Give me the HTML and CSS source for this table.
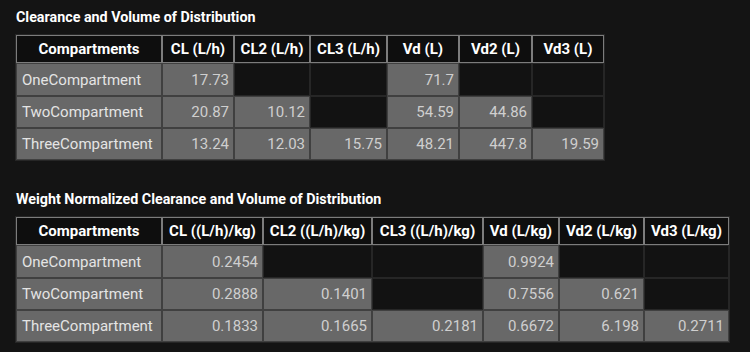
FILE: index.html
```html
<!DOCTYPE html>
<html>
<head>
<meta charset="utf-8">
<link rel="stylesheet" href="styles.css">
</head>
<body>
<section class="block">
  <h2 class="title">Clearance and Volume of Distribution</h2>
  <table class="grid t1">
    <colgroup><col class="c0"><col class="c1"><col class="c2"><col class="c3"><col class="c4"><col class="c5"><col class="c6"></colgroup>
    <thead><tr><th>Compartments</th><th>CL (L/h)</th><th>CL2 (L/h)</th><th>CL3 (L/h)</th><th>Vd (L)</th><th>Vd2 (L)</th><th>Vd3 (L)</th></tr></thead>
    <tbody>
      <tr class="r1"><td class="name">OneCompartment</td><td>17.73</td><td class="empty"></td><td class="empty"></td><td>71.7</td><td class="empty"></td><td class="empty"></td></tr>
      <tr class="r2"><td class="name">TwoCompartment</td><td>20.87</td><td>10.12</td><td class="empty"></td><td>54.59</td><td>44.86</td><td class="empty"></td></tr>
      <tr class="r3"><td class="name">ThreeCompartment</td><td>13.24</td><td>12.03</td><td>15.75</td><td>48.21</td><td>447.8</td><td>19.59</td></tr>
    </tbody>
  </table>
</section>
<section class="block second">
  <h2 class="title">Weight Normalized Clearance and Volume of Distribution</h2>
  <table class="grid t2">
    <colgroup><col class="c0"><col class="c1"><col class="c2"><col class="c3"><col class="c4"><col class="c5"><col class="c6"></colgroup>
    <thead><tr><th>Compartments</th><th>CL ((L/h)/kg)</th><th>CL2 ((L/h)/kg)</th><th>CL3 ((L/h)/kg)</th><th>Vd (L/kg)</th><th>Vd2 (L/kg)</th><th>Vd3 (L/kg)</th></tr></thead>
    <tbody>
      <tr class="r1"><td class="name">OneCompartment</td><td>0.2454</td><td class="empty"></td><td class="empty"></td><td>0.9924</td><td class="empty"></td><td class="empty"></td></tr>
      <tr class="r2"><td class="name">TwoCompartment</td><td>0.2888</td><td>0.1401</td><td class="empty"></td><td>0.7556</td><td>0.621</td><td class="empty"></td></tr>
      <tr class="r3"><td class="name">ThreeCompartment</td><td>0.1833</td><td>0.1665</td><td>0.2181</td><td>0.6672</td><td>6.198</td><td>0.2711</td></tr>
    </tbody>
  </table>
</section>
</body>
</html>
```
FILE: styles.css
```css
html, body {
  margin: 0;
  background: #141414;
}
body {
  padding: 9px 15px 0 15px;
  font-family: Roboto, "Liberation Sans", sans-serif;
  color: #dcdcdc;
}
.block {
  display: flex;
  flex-direction: column;
  align-items: flex-start;
}
.second {
  margin-top: 30px;
}
.title {
  margin: 0 0 9px 1px;
  font-size: 14.3px;
  line-height: 16px;
  font-weight: 700;
  color: #ffffff;
  letter-spacing: 0;
}
.grid {
  border-collapse: separate;
  border-spacing: 0;
  table-layout: fixed;
  border: 1px solid #262626;
}
.grid th {
  background: #0e0e0e;
  border: 1px solid #7c7c7c;
  color: #ffffff;
  font-weight: 700;
  font-size: 15px;
  height: 28px;
  padding: 0 2px;
  text-align: center;
  white-space: nowrap;
  box-sizing: border-box;
}
.grid td {
  background: #686868;
  border: 1px solid #404040;
  color: #cfcfcf;
  font-size: 15px;
  padding: 0 4px 0 5px;
  text-align: right;
  white-space: nowrap;
  box-sizing: border-box;
}
.grid td.name {
  text-align: left;
  color: #e4e4e4;
}
.grid td.empty {
  background: #121212;
  border-color: #262626;
}
.grid .r1 td { height: 33px; }
.grid .r2 td { height: 32px; }
.grid .r3 td { height: 32px; }

.t1 .c0 { width: 146px; }
.t1 .c1 { width: 72px; }
.t1 .c2 { width: 76px; }
.t1 .c3 { width: 77px; }
.t1 .c4 { width: 72px; }
.t1 .c5 { width: 73px; }
.t1 .c6 { width: 72px; }

.t2 .c0 { width: 146px; }
.t2 .c1 { width: 101px; }
.t2 .c2 { width: 109px; }
.t2 .c3 { width: 111px; }
.t2 .c4 { width: 76px; }
.t2 .c5 { width: 85px; }
.t2 .c6 { width: 85px; }
```
